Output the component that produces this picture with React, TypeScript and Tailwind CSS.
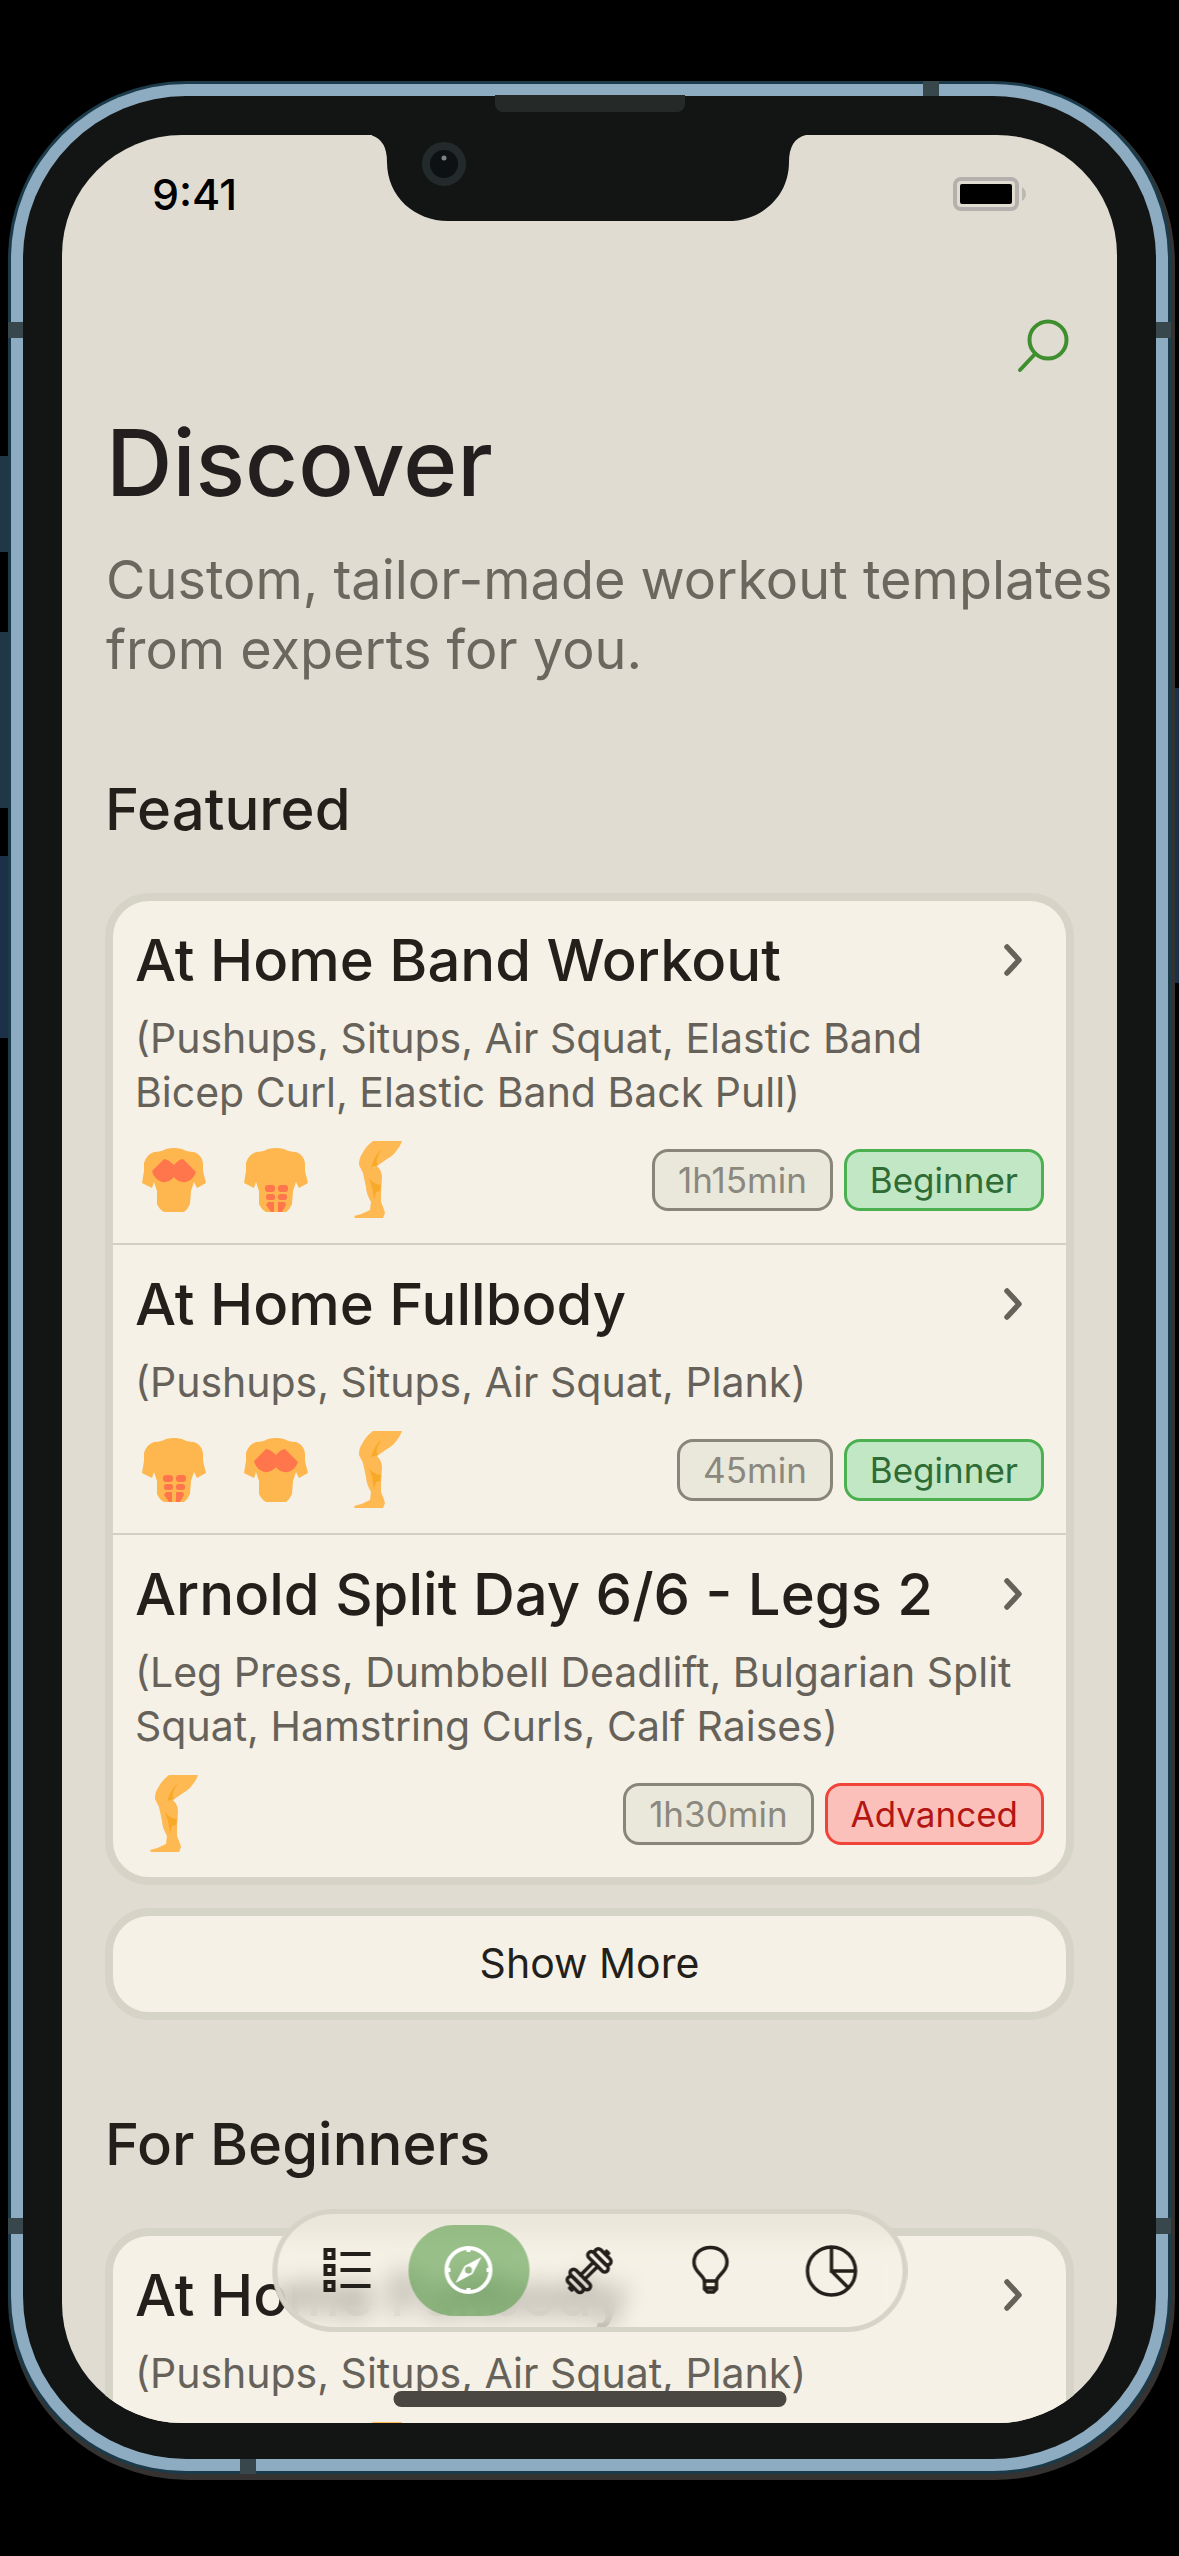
import React from "react";

type Muscle = "chest" | "abs" | "legs";
type Level = "Beginner" | "Advanced";

interface Workout {
  title: string;
  exercises: string;
  muscles: Muscle[];
  duration: string;
  level: Level;
}

const featured: Workout[] = [
  {
    title: "At Home Band Workout",
    exercises: "(Pushups, Situps, Air Squat, Elastic Band Bicep Curl, Elastic Band Back Pull)",
    muscles: ["chest", "abs", "legs"],
    duration: "1h15min",
    level: "Beginner",
  },
  {
    title: "At Home Fullbody",
    exercises: "(Pushups, Situps, Air Squat, Plank)",
    muscles: ["abs", "chest", "legs"],
    duration: "45min",
    level: "Beginner",
  },
  {
    title: "Arnold Split Day 6/6 - Legs 2",
    exercises: "(Leg Press, Dumbbell Deadlift, Bulgarian Split Squat, Hamstring Curls, Calf Raises)",
    muscles: ["legs"],
    duration: "1h30min",
    level: "Advanced",
  },
];

const beginners: Workout[] = [featured[1]];

function Torso({ part }: { part: "chest" | "abs" }) {
  return (
    <svg viewBox="0 0 64 64" className="size-16" aria-hidden="true">
      <path
        fill="#feb74f"
        d="M24 1Q32-1 40 1Q45 4 52 4Q60 7 61 15L61 23L64 35L55 40L52 34L49 43L48 56Q46 61 42 64L22 64Q17 61 15 56L15 43L12 34L10 40L0 35L2 23L2 15Q4 7 12 4Q19 4 24 1Z"
      />
      {part === "chest" ? (
        <path
          fill="#ff754c"
          d="M22 11Q26 11 32 17Q37 11 41 11L54 24Q51 32 44 34Q36 35 32 29Q27 35 20 34Q12 31 10 23Z"
        />
      ) : (
        <g fill="#ff754c">
          <rect x="21" y="37" width="10" height="7" rx="3" />
          <rect x="34" y="37" width="10" height="7" rx="3" />
          <rect x="22" y="46" width="9" height="6" rx="2.5" />
          <rect x="34" y="46" width="9" height="6" rx="2.5" />
          <path d="M24 54H30V64H27L22 57Z" />
          <path d="M41 54H34V64H38L42 57Z" />
        </g>
      )}
    </svg>
  );
}

function Leg() {
  return (
    <svg viewBox="0 0 48 78" className="h-[78px] w-12" aria-hidden="true">
      <path
        fill="#feb953"
        d="M19 0L48 0Q46 6 43 9Q39 15 33 18L23 25Q28 30 28 36L27 52L27 61Q30 68 31 72L29 77L1 77L0 75Q9 73 16 69L17 61Q12 52 12 46L9 32L5 24Q5 17 8 13Q12 5 19 0Z"
      />
      <path fill="#f7a928" d="M28 8Q22 13 19 21L17 26L24 24Q20 20 28 8Z" />
      <path fill="#f7a928" d="M15 37Q19 43 27 44L26 50L22 51L20 58L18 46Z" />
    </svg>
  );
}

function MuscleIcon({ muscle }: { muscle: Muscle }) {
  return (
    <span className="flex size-[78px] items-center justify-center" role="img" aria-label={muscle}>
      {muscle === "legs" ? <Leg /> : <Torso part={muscle} />}
    </span>
  );
}

const levelStyle: Record<Level, string> = {
  Beginner: "border-[#4caf50] bg-[#c2e7c4] text-[#2e6b35]",
  Advanced: "border-[#f0443a] bg-[#fcc0ba] text-[#b31613]",
};

function Pill({ className, children }: { className: string; children: React.ReactNode }) {
  return (
    <span className={`flex h-[62px] items-center rounded-2xl border-3 px-[23px] text-[35px] ${className}`}>
      {children}
    </span>
  );
}

function WorkoutRow({ workout }: { workout: Workout }) {
  return (
    <li>
      <a href="#workout" className="block px-[22px] py-6">
        <div className="flex items-center justify-between pr-[18px]">
          <h3 className="text-[58px] font-medium leading-[70px] text-[#231f1b]">{workout.title}</h3>
          <svg viewBox="0 0 24 36" className="h-9 w-6" fill="none" aria-hidden="true">
            <path d="M5 5L17 18L5 31" stroke="#66625a" strokeWidth="5.5" strokeLinecap="round" strokeLinejoin="round" />
          </svg>
        </div>
        <p className="mt-4 pr-4 text-[41px] leading-[54px] text-[#66625a]">{workout.exercises}</p>
        <div className="mt-[22px] flex items-center justify-between">
          <div className="flex gap-6">
            {workout.muscles.map((m) => (
              <MuscleIcon key={m} muscle={m} />
            ))}
          </div>
          <div className="flex gap-[11px]">
            <Pill className="border-[#88857b] bg-[#eae7db] text-[#8b887e]">{workout.duration}</Pill>
            <Pill className={levelStyle[workout.level]}>{workout.level}</Pill>
          </div>
        </div>
      </a>
    </li>
  );
}

function WorkoutCard({ workouts }: { workouts: Workout[] }) {
  return (
    <ul className="mt-[49px] divide-y-2 divide-[#d3cfc4] rounded-[44px] border-8 border-[#d6d3c7] bg-[#f5f1e6]">
      {workouts.map((w) => (
        <WorkoutRow key={w.title} workout={w} />
      ))}
    </ul>
  );
}

function ListIcon() {
  return (
    <svg viewBox="0 0 52 52" className="size-[52px]" fill="none" stroke="#231f1b" strokeWidth="4" aria-hidden="true">
      {[9, 25, 41].map((y) => (
        <g key={y}>
          <rect x="4" y={y - 4} width="8" height="8" />
          <path d={`M19 ${y}H49`} />
        </g>
      ))}
    </svg>
  );
}

function CompassIcon() {
  return (
    <svg viewBox="0 0 52 52" className="size-[52px]" fill="none" aria-hidden="true">
      <circle cx="26" cy="25" r="22" stroke="#fff" strokeWidth="4" />
      <path d="M26 3V7M26 43V47M4 25H8M44 25H48" stroke="#fff" strokeWidth="4" />
      <path
        fill="#fff"
        fillRule="evenodd"
        d="M39 12L30 29L13 38L22 21ZM26 21.500A3.500 3.500 0 1 0 26 28.500A3.500 3.500 0 1 0 26 21.500Z"
      />
    </svg>
  );
}

function DumbbellIcon() {
  return (
    <svg viewBox="0 0 52 52" className="size-[52px]" fill="none" stroke="#231f1b" strokeWidth="3.500" strokeLinecap="round" aria-hidden="true">
      <g transform="rotate(-45 26 26)">
        <path d="M17 22.500H35M17 28.500H35" />
        <rect x="10" y="12.500" width="7" height="26" rx="3.500" />
        <rect x="35" y="12.500" width="7" height="26" rx="3.500" />
        <rect x="3" y="15.500" width="7" height="20" rx="3.500" />
        <rect x="42" y="15.500" width="7" height="20" rx="3.500" />
        <path d="M0 24V27M52 24V27" />
      </g>
    </svg>
  );
}

function BulbIcon() {
  return (
    <svg viewBox="0 0 52 52" className="size-[52px]" fill="none" stroke="#231f1b" strokeWidth="3.500" strokeLinejoin="round" aria-hidden="true">
      <path d="M20 36C19 30 9.500 27 9.500 17.500C9.500 8 17 2.500 26 2.500C35 2.500 42.500 8 42.500 17.500C42.500 27 33 30 32 36Z" />
      <path d="M20 36V44L23 47H29L32 44V36M20 43H32" />
    </svg>
  );
}

function PieIcon() {
  return (
    <svg viewBox="0 0 52 52" className="size-[52px]" fill="none" stroke="#231f1b" strokeWidth="3.500" aria-hidden="true">
      <circle cx="26" cy="26" r="24" />
      <path d="M26 2V26H50M26 26L43 43" />
    </svg>
  );
}

const tabs = [
  { label: "Log", Icon: ListIcon },
  { label: "Discover", Icon: CompassIcon },
  { label: "Workouts", Icon: DumbbellIcon },
  { label: "Insights", Icon: BulbIcon },
  { label: "Statistics", Icon: PieIcon },
];

function TabBar() {
  return (
    <nav
      aria-label="Main"
      className="absolute bottom-[91px] left-1/2 flex -translate-x-1/2 rounded-full border-5 border-[#d6d3c7] bg-[#f5f1e6]/50 px-[10px] py-[11px] backdrop-blur-md"
    >
      {tabs.map(({ label, Icon }) => (
        <button
          key={label}
          type="button"
          aria-label={label}
          className={`flex h-[91px] w-[121px] items-center justify-center rounded-full ${
            label === "Discover" ? "bg-[#3f8f2f]/50" : ""
          }`}
        >
          <Icon />
        </button>
      ))}
    </nav>
  );
}

function StatusBar() {
  return (
    <div className="flex h-[118px] items-center justify-between px-[90px]">
      <time className="text-[43px] font-medium leading-none text-black">9:41</time>
      <svg viewBox="0 0 74 34" className="h-[34px] w-[74px]" fill="none" aria-label="Battery full" role="img">
        <rect x="2" y="2" width="62" height="30" rx="6" stroke="#b4b0ad" strokeWidth="4" />
        <rect x="7" y="7" width="52" height="20" rx="2" fill="#000" />
        <path d="M69 10Q73 13 73 17Q73 21 69 24Z" fill="#bcb9b3" />
      </svg>
    </div>
  );
}

function Notch() {
  return (
    <svg viewBox="0 0 436 87" className="absolute left-1/2 top-0 h-[87px] w-[436px] -translate-x-1/2" aria-hidden="true">
      <path d="M-2 0Q15 4 15 27C15 62 43 86 76 86H356C389 86 417 62 417 27Q417 4 434 0Z" fill="#131514" />
      <circle cx="72" cy="29" r="18" fill="#0d1113" stroke="#222a2b" strokeWidth="8" />
      <circle cx="72" cy="23" r="2.500" fill="#7e8484" />
    </svg>
  );
}

export default function App() {
  return (
    <div className="h-screen overflow-hidden bg-black px-2 pb-[82px] pt-[81px] font-['Inter',sans-serif]">
      <div className="relative h-full">
        {/* Side buttons */}
        <span className="absolute -left-2 top-[375px] h-24 w-3 bg-[#203845]" />
        <span className="absolute -left-2 top-[551px] h-44 w-3 bg-[#203845]" />
        <span className="absolute -left-2 top-[775px] h-[182px] w-3 bg-[#1c3048]" />
        <span className="absolute -right-2 top-[607px] h-[295px] w-3 bg-[#1c3048]" />

        {/* Metal frame */}
        <div className="relative h-full rounded-[178px] bg-[#1b3a4a] p-[3px] shadow-[2px_4px_0_2px_#343332]">
          <div className="h-full rounded-[175px] bg-[#8eacc1] p-3">
            <div className="flex h-full flex-col rounded-[163px] bg-[#131514] px-[39px] pb-9 pt-[39px]">
              <main className="relative min-h-0 flex-1 overflow-hidden rounded-[120px] bg-[#e0dcd1]">
                <StatusBar />
                <div className="pl-11">
                  <div className="flex justify-end pr-12 pt-[66px]">
                    <button type="button" aria-label="Search">
                      <svg viewBox="0 0 52 54" className="h-[54px] w-[52px]" fill="none" stroke="#3f8f2f" strokeWidth="4" strokeLinecap="round">
                        <circle cx="31" cy="21" r="18.500" />
                        <path d="M18 35L3 51" />
                      </svg>
                    </button>
                  </div>
                  <h1 className="mt-10 text-[92px] font-medium leading-[100px] text-[#231f1e]">Discover</h1>
                  <p className="mt-8 text-[54px] leading-[70px] text-[#6b675f]">
                    Custom, tailor-made workout templates from experts for you.
                  </p>
                </div>
                <div className="px-[43px]">
                  <section>
                    <h2 className="mt-[89px] text-[58px] font-medium leading-[70px] text-[#231f1b]">Featured</h2>
                    <WorkoutCard workouts={featured} />
                    <button
                      type="button"
                      className="mt-[23px] block h-28 w-full rounded-[44px] border-8 border-[#d6d3c7] bg-[#f5f1e6] text-[41px] text-[#231f1b]"
                    >
                      Show More
                    </button>
                  </section>
                  <section>
                    <h2 className="mt-[89px] text-[58px] font-medium leading-[70px] text-[#231f1b]">For Beginners</h2>
                    <WorkoutCard workouts={beginners} />
                  </section>
                </div>
                <Notch />
                <TabBar />
                <span className="absolute bottom-4 left-1/2 h-4 w-[393px] -translate-x-1/2 rounded-full bg-[#4a4742]" />
              </main>
            </div>
          </div>

          {/* Antenna bands and earpiece */}
          <span className="absolute right-[232px] top-0 h-[15px] w-4 bg-[#37474c]" />
          <span className="absolute bottom-0 left-[232px] h-[15px] w-4 bg-[#37474c]" />
          <span className="absolute left-0 top-[241px] h-4 w-[15px] bg-[#37474c]" />
          <span className="absolute right-0 top-[241px] h-4 w-[15px] bg-[#37474c]" />
          <span className="absolute bottom-60 left-0 h-4 w-[15px] bg-[#37474c]" />
          <span className="absolute bottom-60 right-0 h-4 w-[15px] bg-[#37474c]" />
          <span className="absolute left-1/2 top-[14px] h-[17px] w-[190px] -translate-x-1/2 rounded-b-lg bg-[#252a29]" />
        </div>
      </div>
    </div>
  );
}
